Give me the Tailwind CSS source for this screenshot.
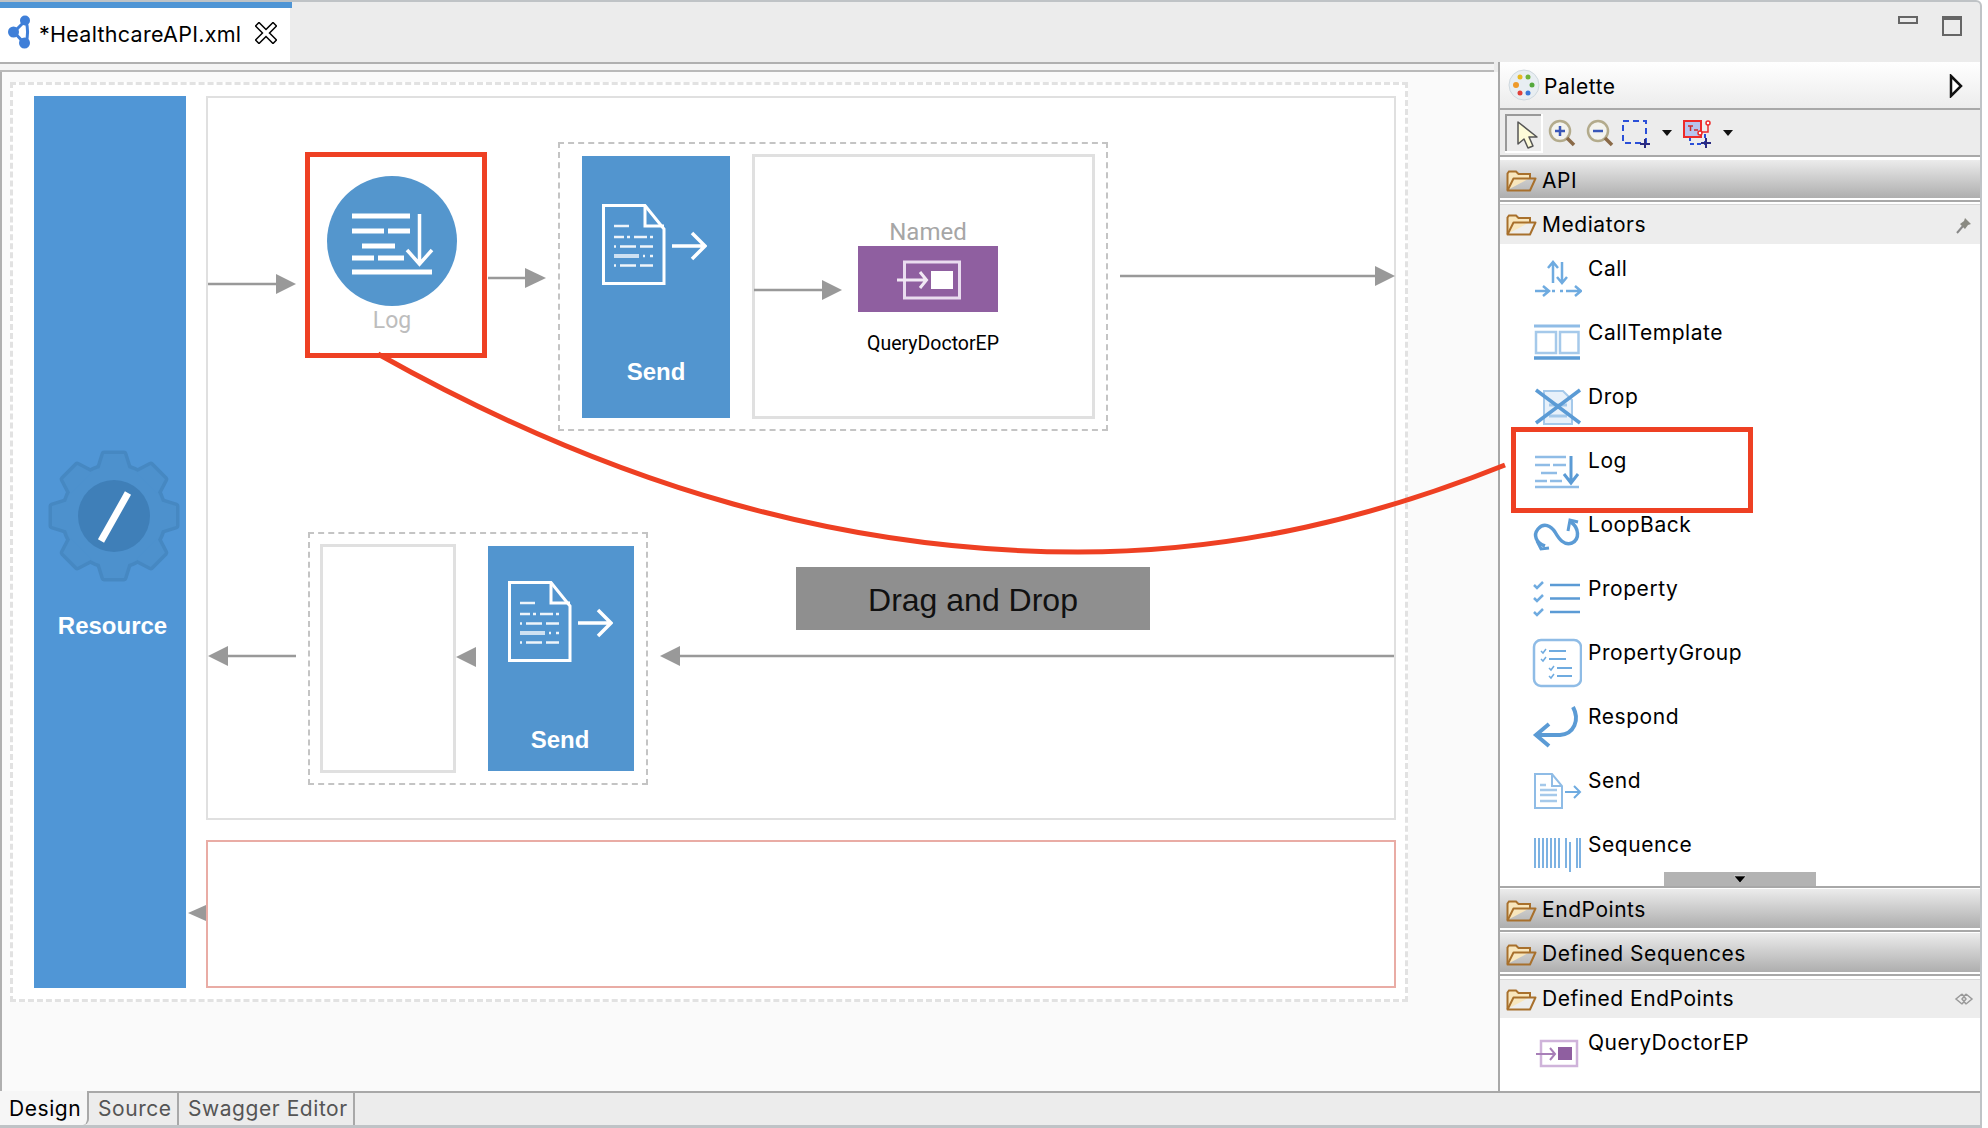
<!DOCTYPE html>
<html lang="en">
<head>
    <meta charset="UTF-8">
    <title>HealthcareAPI.xml</title>
    <script src="https://cdn.jsdelivr.net/npm/@tailwindcss/browser@4"></script>
</head>
<body class="bg-white font-['Inter','Liberation_Sans',sans-serif] text-black">
<!-- shared icons -->
<svg class="hidden" width="0" height="0">
    <defs>
        <linearGradient id="folderFill" x1="0" y1="0" x2="0" y2="1">
            <stop offset="0" stop-color="#fdf0cf"/>
            <stop offset="1" stop-color="#efc67c"/>
        </linearGradient>
        <symbol id="folder" viewBox="0 0 31 23">
            <path d="M1.5 21V4.5L3 2.5H10L12.5 5H24V9" fill="#f8e6bd" stroke="#a8702c" stroke-width="2"/>
            <path d="M1.5 21.5L7.5 9.5H29.5L24 21.5Z" fill="url(#folderFill)" stroke="#a8702c" stroke-width="2" stroke-linejoin="round"/>
        </symbol>
        <symbol id="send-glyph" viewBox="602 204 105 81">
            <g fill="none" stroke="#fff">
                <path d="M603.5 205.5H645L664 229V283.5H603.5Z" stroke-width="3"/>
                <path d="M645 205.5V226H664" stroke-width="3"/>
                <path d="M672 246H705M692 233L705 246L692 259" stroke-width="3.5"/>
                <g stroke-width="2.5" opacity="0.9">
                    <path d="M614 226H629"/>
                    <path d="M614 237H624M627 237H630M634 237H647M650 237H653"/>
                    <path d="M614 246.5H616M620 246.5H636M640 246.5H653"/>
                    <path d="M643 256H645M650 256H653"/>
                    <path d="M614 256H639" stroke-width="4" opacity="0.8"/>
                    <path d="M614 265.5H616M620 265.5H636M640 265.5H653"/>
                </g>
            </g>
        </symbol>
        <g id="gear-shape">
            <circle r="50"/>
            <path d="M-15 -46L-10 -62H10L15 -46Z"/>
            <path d="M-15 -46L-10 -62H10L15 -46Z" transform="rotate(45)"/>
            <path d="M-15 -46L-10 -62H10L15 -46Z" transform="rotate(90)"/>
            <path d="M-15 -46L-10 -62H10L15 -46Z" transform="rotate(135)"/>
            <path d="M-15 -46L-10 -62H10L15 -46Z" transform="rotate(180)"/>
            <path d="M-15 -46L-10 -62H10L15 -46Z" transform="rotate(225)"/>
            <path d="M-15 -46L-10 -62H10L15 -46Z" transform="rotate(270)"/>
            <path d="M-15 -46L-10 -62H10L15 -46Z" transform="rotate(315)"/>
        </g>
    </defs>
</svg>

<div class="relative w-[1988px] h-[1128px] overflow-hidden">
    <div class="w-[1982px] h-[1128px] flex flex-col bg-[#ececec] border-t-2 border-r-2 border-b-[3px] border-[#bfc3c6] rounded-tr-[6px]">

        <!-- editor tab strip -->
        <div class="h-[60px] flex shrink-0">
            <div class="w-[292px] flex flex-col">
                <div class="h-[6px] bg-[#4f95d5]"></div>
                <div class="w-[290px] h-[54px] bg-white flex items-center pl-[6px]">
                    <svg class="w-[27px] h-[36px] mb-[4px]" viewBox="6 15 27 36">
                        <path d="M14 32L25 21M14 32L24 43M26 21C28 28 28 36 26 43" stroke="#3f7fd8" stroke-width="3" fill="none"/>
                        <circle cx="13.500" cy="32" r="5.500" fill="#3f7fd8"/>
                        <circle cx="25" cy="20.500" r="5" fill="#3f7fd8"/>
                        <circle cx="24.500" cy="43" r="5.500" fill="#3f7fd8"/>
                    </svg>
                    <span class="ml-[6px] mb-[2px] text-[21.500px] leading-7 tracking-[0.28px]">*HealthcareAPI.xml</span>
                    <svg class="w-[22px] h-[22px] ml-[14px] mb-[4px]" viewBox="0 0 22 22">
                        <path d="M4 4L18 18M18 4L4 18" stroke="#000" stroke-width="6.500" stroke-linecap="square"/>
                        <path d="M4 4L18 18M18 4L4 18" stroke="#fff" stroke-width="3.500" stroke-linecap="square"/>
                    </svg>
                </div>
            </div>
            <div class="flex-1 flex justify-end">
                <div class="w-[20px] h-[8px] mt-[14px] border-2 border-[#666]"></div>
                <div class="w-[20px] h-[20px] mt-[14px] ml-[24px] mr-[18px] border-2 border-t-[4px] border-[#666]"></div>
            </div>
        </div>

        <div class="h-[1029px] flex shrink-0">
            <!-- editor -->
            <div class="w-[1498px] flex flex-col">
                <div class="h-[10px] w-[1494px] border-t-2 border-b-2 border-t-[#b0b0b0] border-b-[#b9b9b9] bg-[#f4f4f4] shrink-0"></div>
                <div class="flex-1 bg-[#fafafa] border-l-2 border-[#b0b0b0] pt-[10px] pl-[8px]">
                    <div class="w-[1398px] h-[920px] bg-white border-[3px] border-dashed border-[#e2e2e2] pt-[11px] pl-[21px] flex gap-[20px]">

                        <!-- resource -->
                        <div class="w-[152px] h-[892px] bg-[#5096d6] flex flex-col items-center pt-[354px] shrink-0">
                            <svg class="w-[132px] h-[132px] ml-[7px]" viewBox="-66 -66 132 132">
                                <use href="#gear-shape" fill="#4688c2" stroke="#4688c2" stroke-width="7" stroke-linejoin="round"/>
                                <use href="#gear-shape" fill="#4d91cd"/>
                                <circle r="36" fill="#3f7fb8"/>
                                <path d="M14 -23L-13 25" stroke="#fff" stroke-width="7"/>
                            </svg>
                            <span class="mt-[29px] ml-[5px] font-['Liberation_Sans',sans-serif] font-bold text-white text-[24px] leading-[30px]">Resource</span>
                        </div>

                        <div class="w-[1190px] flex flex-col gap-[20px] shrink-0">
                            <!-- in / out sequence -->
                            <div class="relative h-[724px] border-2 border-[#e0e0e0] bg-white">
                                <div class="absolute left-[97px] top-[54px] w-[182px] h-[206px] border-[5px] border-[#ee4023] pl-[17px] pt-[19px] flex flex-col">
                                    <svg class="w-[130px] h-[130px]" viewBox="327 176 130 130">
                                        <circle cx="392" cy="241" r="65" fill="#5496cd"/>
                                        <g fill="none" stroke="#fff" stroke-width="5">
                                            <path d="M352 216H410M352 231H384M388 231H410M362 246H395M352 258H374M378 258H404M352 272H432"/>
                                            <path d="M419.500 214V264M407 250L419.500 264L432 250" stroke-width="3.500"/>
                                        </g>
                                    </svg>
                                    <span class="w-[130px] mt-[5px] text-center font-['Roboto',sans-serif] text-[23px] leading-5 text-[#bdbdbd]">Log</span>
                                </div>

                                <div class="absolute left-[350px] top-[44px] w-[550px] h-[289px] border-2 border-dashed border-[#c4c4c4] pl-[22px] flex items-center gap-[22px]">
                                    <div class="w-[148px] h-[262px] bg-[#5295cf] flex flex-col shrink-0">
                                        <svg class="w-[105px] h-[81px] ml-[20px] mt-[48px]"><use href="#send-glyph"/></svg>
                                        <span class="mt-[73px] text-center font-['Liberation_Sans',sans-serif] font-bold text-white text-[24px] leading-7">Send</span>
                                    </div>
                                    <div class="w-[343px] h-[265px] border-[3px] border-[#e0e0e0] pl-[103px] pt-[61px] shrink-0">
                                        <div class="w-[140px] flex flex-col items-center">
                                            <span class="font-['Roboto',sans-serif] text-[24px] leading-7 text-[#a6a6a6]">Named</span>
                                            <div class="w-[140px] h-[66px] bg-[#8f5fa0] shrink-0">
                                                <svg class="w-[140px] h-[66px]" viewBox="858 246 140 66">
                                                    <rect x="904.500" y="262" width="55" height="36" fill="none" stroke="#e9dcef" stroke-width="3"/>
                                                    <rect x="931" y="271" width="22" height="18" fill="#fff"/>
                                                    <path d="M897 280H926M920 272L926.500 280L920 288" fill="none" stroke="#f1e8f4" stroke-width="3"/>
                                                </svg>
                                            </div>
                                            <span class="mt-[20px] pl-[10px] whitespace-nowrap font-['Roboto',sans-serif] text-[19.500px] leading-6 text-black">QueryDoctorEP</span>
                                        </div>
                                    </div>
                                </div>

                                <div class="absolute left-[100px] top-[434px] w-[340px] h-[253px] border-2 border-dashed border-[#c4c4c4] pl-[10px] flex items-center gap-[32px]">
                                    <div class="w-[136px] h-[229px] border-[3px] border-[#e0e0e0] shrink-0"></div>
                                    <div class="w-[146px] h-[225px] bg-[#5295cf] flex flex-col shrink-0">
                                        <svg class="w-[105px] h-[81px] ml-[20px] mt-[35px]"><use href="#send-glyph"/></svg>
                                        <span class="mt-[64px] pr-[2px] text-center font-['Liberation_Sans',sans-serif] font-bold text-white text-[24px] leading-7">Send</span>
                                    </div>
                                </div>

                                <div class="absolute left-[588px] top-[469px] w-[354px] h-[63px] bg-[#8f8f8f] flex items-center justify-center pt-[3px] font-['Liberation_Sans',sans-serif] text-[32px] text-[#111]">Drag and Drop</div>
                            </div>
                            <!-- fault sequence -->
                            <div class="h-[148px] border-2 border-[#e9aca5] bg-white"></div>
                        </div>
                    </div>
                </div>
            </div>

            <!-- palette -->
            <div class="w-[482px] flex flex-col border-l-2 border-[#a8a8a8] bg-white">
                <div class="h-[48px] shrink-0 flex items-center pl-[8px] pr-[17px] border-b-2 border-[#a8a8a8] bg-linear-to-b from-white to-[#ececec]">
                    <svg class="w-[32px] h-[32px]" viewBox="1507 69 32 32">
                        <circle cx="1523" cy="85" r="15" fill="#e8eef2" stroke="#cfd8de"/>
                        <circle cx="1519" cy="77" r="2.500" fill="#e8b820"/>
                        <circle cx="1527" cy="77" r="2.500" fill="#6fb33a"/>
                        <circle cx="1515" cy="85" r="3" fill="#ee9a2a"/>
                        <circle cx="1531" cy="85" r="2.500" fill="#54a83c"/>
                        <circle cx="1519" cy="93" r="2.500" fill="#e0403a"/>
                        <circle cx="1527" cy="93" r="2.500" fill="#3a78d8"/>
                    </svg>
                    <span class="ml-[4px] pt-[3px] text-[21px] leading-7 tracking-[0.55px] flex-1">Palette</span>
                    <svg class="w-[14px] h-[24px] mt-[2px]" viewBox="0 0 14 24"><path d="M2 2L12 12L2 22Z" fill="#fff" stroke="#111" stroke-width="2.500"/></svg>
                </div>

                <div class="h-[47px] shrink-0 flex items-center pl-[5px] border-b-2 border-[#a8a8a8] bg-[#ececec]">
                    <div class="w-[36px] h-[37px] border-t-2 border-l-2 border-[#999] shadow-[1px_1px_0_1px_#fff] pl-[9px] pt-[4px]">
                        <svg class="w-[22px] h-[30px]" viewBox="0 0 22 30">
                            <path d="M2 2V24L8 19L12 28L17 26L13 17H21Z" fill="#fdfbd8" stroke="#555" stroke-width="1.500" stroke-linejoin="round"/>
                        </svg>
                    </div>
                    <svg class="ml-[5px] w-[30px] h-[30px]" viewBox="1546 116 30 30">
                        <circle cx="1560" cy="129" r="10" fill="#f3f3ee" stroke="#b3ab8c" stroke-width="2.500"/>
                        <path d="M1567 136L1574 143" stroke="#8a6a48" stroke-width="3.500"/>
                        <path d="M1555 129H1565M1560 124V134" stroke="#3a58b8" stroke-width="2.500"/>
                    </svg>
                    <svg class="ml-[8px] w-[30px] h-[30px]" viewBox="1584 116 30 30">
                        <circle cx="1598" cy="129" r="10" fill="#f3f3ee" stroke="#b3ab8c" stroke-width="2.500"/>
                        <path d="M1605 136L1612 143" stroke="#8a6a48" stroke-width="3.500"/>
                        <path d="M1593 129H1603" stroke="#3a58b8" stroke-width="2.500"/>
                    </svg>
                    <svg class="ml-[7px] w-[30px] h-[30px]" viewBox="1621 116 30 30">
                        <rect x="1623" y="119" width="23" height="22" fill="none" stroke="#2a4fd8" stroke-width="2" stroke-dasharray="6 4"/>
                        <path d="M1640 142H1650M1645 137V147" stroke="#2a2a80" stroke-width="2"/>
                    </svg>
                    <svg class="ml-[10px] w-[12px] h-[8px]" viewBox="0 0 12 8"><path d="M1 1H11L6 7Z" fill="#111"/></svg>
                    <svg class="ml-[9px] w-[30px] h-[30px]" viewBox="1681 116 30 30">
                        <rect x="1689" y="133" width="15" height="9" fill="none" stroke="#2a4fd8" stroke-width="2" stroke-dasharray="4 3"/>
                        <rect x="1683" y="119" width="17" height="16" fill="#b8c4ee" stroke="#ee2a2a" stroke-width="2"/>
                        <path d="M1687 124H1692M1689.500 124V129M1693 128H1697" stroke="#d02a2a" stroke-width="1.500"/>
                        <circle cx="1699" cy="131" r="2" fill="#fff" stroke="#ee2a2a" stroke-width="1.500"/>
                        <circle cx="1707" cy="121" r="2" fill="#fff" stroke="#ee2a2a" stroke-width="1.500"/>
                        <path d="M1707 123V130H1701" fill="none" stroke="#ee2a2a" stroke-width="1.500"/>
                        <path d="M1700 141H1710M1705 136V146" stroke="#2a2a80" stroke-width="2"/>
                    </svg>
                    <svg class="ml-[10px] w-[12px] h-[8px]" viewBox="0 0 12 8"><path d="M1 1H11L6 7Z" fill="#111"/></svg>
                </div>

                <div class="h-[3px] bg-white shrink-0"></div>
                <div class="h-[38px] shrink-0 flex items-center pl-[6px] pt-[3px] bg-linear-to-b from-[#ececec] to-[#aeaeae]">
                    <svg class="w-[31px] h-[23px]"><use href="#folder"/></svg>
                    <span class="ml-[5px] text-[21px] leading-7 tracking-[0.55px]">API</span>
                </div>
                <div class="h-[7px] shrink-0 bg-white border-b border-[#d8d8d8] pt-[2px]"><div class="h-[2px] bg-[#a8a8a8]"></div></div>

                <div class="h-[39px] shrink-0 flex items-center pl-[6px] pr-[7px] bg-[#ededed]">
                    <svg class="w-[31px] h-[23px]"><use href="#folder"/></svg>
                    <span class="ml-[5px] text-[21px] leading-7 tracking-[0.55px] flex-1">Mediators</span>
                    <svg class="w-[17px] h-[18px]" viewBox="0 0 17 18">
                        <path d="M1 17L7 10" stroke="#888" stroke-width="2"/>
                        <path d="M9 2L15 8L12 9L9 13L4 8L8 5Z" fill="#8a8a82"/>
                    </svg>
                </div>

                <!-- mediator list -->
                <div class="relative h-[642px] shrink-0 bg-white">
                    <div class="h-[64px] flex items-start pl-[32px]">
                        <svg class="w-[50px] h-[64px] shrink-0" viewBox="1532 244 50 64">
                            <g fill="none" stroke="#6fabe0" stroke-width="2.500">
                                <path d="M1553 283V263M1548 268L1553 262L1558 268"/>
                                <path d="M1562 262V282M1557 277L1562 283L1567 277"/>
                                <path d="M1535 291H1548M1543 286L1549 291L1543 296"/>
                                <path d="M1566 291H1580M1575 286L1581 291L1575 296"/>
                                <path d="M1552 291H1555M1560 291H1563"/>
                            </g>
                        </svg>
                        <span class="ml-[6px] mt-[11px] text-[21px] leading-7 tracking-[0.55px]">Call</span>
                    </div>
                    <div class="h-[64px] flex items-start pl-[32px]">
                        <svg class="w-[50px] h-[64px] shrink-0" viewBox="1532 308 50 64">
                            <path d="M1534 326H1580" stroke="#8fbce6" stroke-width="3"/>
                            <rect x="1536" y="332" width="20" height="21" fill="#fff" stroke="#a5c9ea" stroke-width="2.500"/>
                            <rect x="1560" y="332" width="18.500" height="21" fill="#fff" stroke="#a5c9ea" stroke-width="2.500"/>
                            <path d="M1534 358H1580" stroke="#5b9bd5" stroke-width="3.500"/>
                        </svg>
                        <span class="ml-[6px] mt-[11px] text-[21px] leading-7 tracking-[0.55px]">CallTemplate</span>
                    </div>
                    <div class="h-[64px] flex items-start pl-[32px]">
                        <svg class="w-[50px] h-[64px] shrink-0" viewBox="1532 372 50 64">
                            <path d="M1544 391H1563L1572 400V424H1544Z" fill="#e8f1fa" stroke="#a5c9ea" stroke-width="2"/>
                            <path d="M1549 405H1567M1549 416H1567" stroke="#a5c9ea" stroke-width="3"/>
                            <path d="M1536 390L1580 423M1580 390L1536 423" stroke="#5b9bd5" stroke-width="3.500"/>
                        </svg>
                        <span class="ml-[6px] mt-[11px] text-[21px] leading-7 tracking-[0.55px]">Drop</span>
                    </div>
                    <div class="h-[64px] flex items-start pl-[32px]">
                        <svg class="w-[50px] h-[64px] shrink-0" viewBox="1532 436 50 64">
                            <path d="M1535 457H1566M1535 465H1550M1553 465H1566M1541 473H1557M1535 481H1547M1550 481H1562M1535 487H1579" stroke="#8fbce6" stroke-width="2.500"/>
                            <path d="M1571 456V481M1564 474L1571 483L1578 474" fill="none" stroke="#5b9bd5" stroke-width="3"/>
                        </svg>
                        <span class="ml-[6px] mt-[11px] text-[21px] leading-7 tracking-[0.55px]">Log</span>
                    </div>
                    <div class="h-[64px] flex items-start pl-[32px]">
                        <svg class="w-[50px] h-[64px] shrink-0" viewBox="1532 500 50 64">
                            <path d="M1545 546C1536 543 1533 535 1538 529C1544 522 1551 526 1555 532C1559 539 1564 546 1572 543C1580 539 1579 528 1571 522" fill="none" stroke="#5b9bd5" stroke-width="3.500"/>
                            <path d="M1568 531L1570 520L1578 522M1537 541L1541 549L1549 548" fill="none" stroke="#5b9bd5" stroke-width="3"/>
                        </svg>
                        <span class="ml-[6px] mt-[11px] text-[21px] leading-7 tracking-[0.55px]">LoopBack</span>
                    </div>
                    <div class="h-[64px] flex items-start pl-[32px]">
                        <svg class="w-[50px] h-[64px] shrink-0" viewBox="1532 564 50 64">
                            <path d="M1550 585H1580M1550 598.500H1580M1550 612H1580" stroke="#5b9bd5" stroke-width="2.500"/>
                            <path d="M1534 585L1537 588L1543 582M1534 598L1537 601L1543 595M1534 612L1537 615L1543 609" fill="none" stroke="#6fabe0" stroke-width="2.500"/>
                        </svg>
                        <span class="ml-[6px] mt-[11px] text-[21px] leading-7 tracking-[0.55px]">Property</span>
                    </div>
                    <div class="h-[64px] flex items-start pl-[32px]">
                        <svg class="w-[50px] h-[64px] shrink-0" viewBox="1532 628 50 64">
                            <rect x="1534" y="640" width="47" height="46" rx="7" fill="none" stroke="#8fbce6" stroke-width="2.500"/>
                            <path d="M1549 651H1566M1549 659H1566M1557 668H1572M1557 676H1572" stroke="#6fabe0" stroke-width="2"/>
                            <path d="M1541 651L1543 653L1546 649M1541 659L1543 661L1546 657M1549 668L1551 670L1554 666M1549 676L1551 678L1554 674" fill="none" stroke="#6fabe0" stroke-width="1.500"/>
                        </svg>
                        <span class="ml-[6px] mt-[11px] text-[21px] leading-7 tracking-[0.55px]">PropertyGroup</span>
                    </div>
                    <div class="h-[64px] flex items-start pl-[32px]">
                        <svg class="w-[50px] h-[64px] shrink-0" viewBox="1532 692 50 64">
                            <path d="M1573 707C1580 720 1574 734 1560 735H1537M1549 724L1536 735L1549 746" fill="none" stroke="#5b9bd5" stroke-width="4"/>
                        </svg>
                        <span class="ml-[6px] mt-[11px] text-[21px] leading-7 tracking-[0.55px]">Respond</span>
                    </div>
                    <div class="h-[64px] flex items-start pl-[32px]">
                        <svg class="w-[50px] h-[64px] shrink-0" viewBox="1532 756 50 64">
                            <path d="M1535 774H1552L1562 786V808H1535Z" fill="#fff" stroke="#8fbce6" stroke-width="2"/>
                            <path d="M1552 774V786H1562" fill="none" stroke="#8fbce6" stroke-width="2"/>
                            <path d="M1540 785H1546M1540 790H1557M1540 795H1557M1540 801H1557" stroke="#a5c9ea" stroke-width="2.500"/>
                            <path d="M1565 792H1579M1574 786L1580 792L1574 798" fill="none" stroke="#6fabe0" stroke-width="2"/>
                        </svg>
                        <span class="ml-[6px] mt-[11px] text-[21px] leading-7 tracking-[0.55px]">Send</span>
                    </div>
                    <div class="h-[64px] flex items-start pl-[32px]">
                        <svg class="w-[50px] h-[64px] shrink-0" viewBox="1532 820 50 64">
                            <path d="M1535 838V868M1539 838V868M1543 838V868M1547 838V868M1551 838V868M1555 838V868M1559 838V868M1566 838V868M1570 842V872M1577 838V868M1580 838V868" stroke="#7db2e2" stroke-width="2"/>
                        </svg>
                        <span class="ml-[6px] mt-[11px] text-[21px] leading-7 tracking-[0.55px]">Sequence</span>
                    </div>
                    <div class="absolute left-[164px] bottom-0 w-[152px] h-[14px] bg-[#b3b3b3] flex justify-center items-center">
                        <svg class="w-[14px] h-[9px]" viewBox="0 0 14 9"><path d="M1 1H13L7 8Z" fill="#000" stroke="#fff" stroke-width="0.500"/></svg>
                    </div>
                </div>
                <div class="h-[3px] shrink-0 bg-white border-t-2 border-[#a8a8a8]"></div>

                <div class="h-[39px] shrink-0 flex items-center pl-[6px] pt-[3px] bg-linear-to-b from-[#ececec] to-[#aeaeae]">
                    <svg class="w-[31px] h-[23px]"><use href="#folder"/></svg>
                    <span class="ml-[5px] text-[21px] leading-7 tracking-[0.55px]">EndPoints</span>
                </div>
                <div class="h-[5px] shrink-0 bg-white pt-[2px]"><div class="h-[2px] bg-[#a8a8a8]"></div></div>
                <div class="h-[39px] shrink-0 flex items-center pl-[6px] pt-[3px] bg-linear-to-b from-[#ececec] to-[#aeaeae]">
                    <svg class="w-[31px] h-[23px]"><use href="#folder"/></svg>
                    <span class="ml-[5px] text-[21px] leading-7 tracking-[0.55px]">Defined Sequences</span>
                </div>
                <div class="h-[8px] shrink-0 bg-white border-b border-[#d8d8d8] pt-[2px]"><div class="h-[2px] bg-[#a8a8a8]"></div></div>

                <div class="h-[38px] shrink-0 flex items-center pl-[6px] pr-[6px] bg-[#ededed]">
                    <svg class="w-[31px] h-[23px]"><use href="#folder"/></svg>
                    <span class="ml-[5px] text-[21px] leading-7 tracking-[0.55px] flex-1">Defined EndPoints</span>
                    <svg class="w-[20px] h-[14px]" viewBox="0 0 20 14">
                        <path d="M8 2L2 7L8 12M12 2L18 7L12 12M8 2L12 7L8 12M12 2L8 7L12 12" fill="none" stroke="#9a9a9a" stroke-width="1.500"/>
                    </svg>
                </div>
                <div class="flex-1 flex items-start pl-[32px] bg-white">
                    <svg class="w-[50px] h-[64px] shrink-0" viewBox="1532 1018 50 64">
                        <rect x="1541" y="1041" width="36" height="25" fill="none" stroke="#cfb3da" stroke-width="2.500"/>
                        <rect x="1558" y="1047" width="14" height="13" fill="#8f5fa0"/>
                        <path d="M1536 1054H1555M1550 1048L1555 1054L1550 1060" fill="none" stroke="#a87fb8" stroke-width="2"/>
                    </svg>
                    <span class="ml-[6px] mt-[11px] text-[21px] leading-7 tracking-[0.55px]">QueryDoctorEP</span>
                </div>
            </div>
        </div>

        <!-- editor page tabs -->
        <div class="flex-1 flex border-t-2 border-[#a8a8a8] text-[21px] leading-7 tracking-[0.55px] text-[#555] relative">
            <div class="w-[89px] -mt-[2px] pl-[9px] pt-[4px] bg-[#f6f6f6] text-black border-r-2 border-[#a8a8a8] rounded-br-[6px]">Design</div>
            <div class="w-[90px] pl-[9px] pt-[2px] border-r-2 border-[#a8a8a8]">Source</div>
            <div class="w-[176px] pl-[9px] pt-[2px] border-r-2 border-[#a8a8a8]">Swagger Editor</div>
        </div>
    </div>

    <!-- connectors and callouts -->
    <svg class="absolute inset-0 pointer-events-none" width="1988" height="1128" viewBox="0 0 1988 1128">
        <g stroke="#999" stroke-width="2.500" fill="none">
            <path d="M208 284H280"/>
            <path d="M488 278H530"/>
            <path d="M754 290H825"/>
            <path d="M1120 276H1380"/>
            <path d="M225 656H296"/>
            <path d="M678 656H1394"/>
        </g>
        <g fill="#999">
            <path d="M276 274L296 284L276 294Z"/>
            <path d="M525 268L546 278L525 288Z"/>
            <path d="M822 280L842 290L822 300Z"/>
            <path d="M1375 266L1395 276L1375 286Z"/>
            <path d="M228 646L208 656L228 666Z"/>
            <path d="M476 647L456 657L476 667Z"/>
            <path d="M680 646L660 656L680 666Z"/>
            <path d="M206 905L188 913L206 921Z"/>
        </g>
        <path d="M378 354C620 490 850 552 1078 552C1240 552 1380 515 1505 465" fill="none" stroke="#ee4023" stroke-width="5"/>
        <rect x="1513.500" y="429.500" width="237" height="81" fill="none" stroke="#ee4023" stroke-width="5"/>
    </svg>
</div>
</body>
</html>
